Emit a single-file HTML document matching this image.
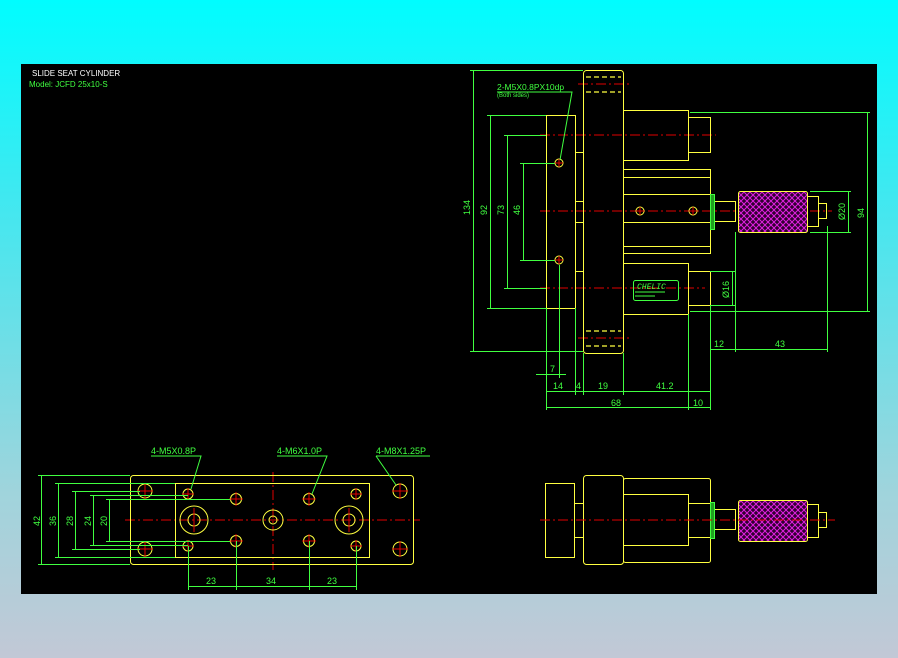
<!DOCTYPE html>
<html><head><meta charset="utf-8"><style>
html,body{margin:0;padding:0;}
body{width:898px;height:658px;overflow:hidden;background:linear-gradient(180deg,#00fdff 0%,#40e8f0 30%,#a0d4dc 75%,#c2c8d6 100%);position:relative;font-family:"Liberation Mono",monospace;}
#cad{position:absolute;left:0;top:0;}
</style></head><body>
<svg id="cad" width="898" height="658" viewBox="0 0 898 658" xmlns="http://www.w3.org/2000/svg">
<defs>
<pattern id="kn" width="6" height="6" patternUnits="userSpaceOnUse">
<rect width="6" height="6" fill="#300030"/>
<path d="M0 0L6 6M6 0L0 6" stroke="#e020e0" stroke-width="1"/>
</pattern>
</defs>
<rect x="21" y="64" width="856" height="530" fill="#000"/>
<text x="32" y="76" fill="#fff" font-size="8" font-family="Liberation Sans,sans-serif">SLIDE SEAT CYLINDER</text>
<text x="29" y="87" fill="#40ff40" font-size="8" font-family="Liberation Sans,sans-serif">Model: JCFD 25x10-S</text>

<!-- red centre lines -->
<g stroke="#e00000" stroke-width="1" stroke-dasharray="10,3,2,3" fill="none">
<path d="M578 84H630M578 338H630M540 135H716M540 211H832M540 288H705"/>
<path d="M125 520H420M273 472V570M540 520H835"/>
</g>

<!-- top view yellow -->
<g stroke="#ffff40" stroke-width="1" fill="none">
<rect x="583.5" y="70.5" width="40" height="283" rx="3"/>
<rect x="546.5" y="115.5" width="29" height="193"/>
<path d="M575.5 152.5H583.5M575.5 201.5H583.5M575.5 222.5H583.5M575.5 271.5H583.5"/>
<rect x="623.5" y="110.5" width="65" height="50"/>
<rect x="688.5" y="117.5" width="22" height="35"/>
<rect x="623.5" y="169.5" width="87" height="84"/>
<path d="M623.5 177.5H710.5M623.5 194.5H710.5M623.5 222.5H710.5M623.5 246.5H710.5"/>
<rect x="714.5" y="201.5" width="21" height="20"/>
<rect x="623.5" y="263.5" width="65" height="51"/>
<rect x="688.5" y="271.5" width="22" height="34"/>
<rect x="807.5" y="196.5" width="11" height="30"/>
<rect x="818.5" y="203.5" width="8" height="15"/>
<circle cx="559" cy="163" r="4"/><circle cx="559" cy="260" r="4"/>
<circle cx="640" cy="211" r="4"/><circle cx="693" cy="211" r="4"/>
</g>
<g stroke="#ffff40" stroke-dasharray="5,3" stroke-width="1.2">
<path d="M586 77H621M586 92H621M586 331H621M586 346H621"/>
</g>
<rect x="738.5" y="191.5" width="69" height="41" rx="2" fill="url(#kn)" stroke="#ffff40"/>
<rect x="710.5" y="194.5" width="4" height="35" fill="#20a020" stroke="#40ff40"/>
<g stroke="#e00000"><path d="M555 163h8M559 159v8M555 260h8M559 256v8M636 211h8M640 207v8M689 211h8M693 207v8"/></g>
<rect x="633.5" y="280.5" width="45" height="20" rx="2" fill="none" stroke="#40ff40"/>
<text x="637" y="289" fill="#40ff40" font-size="8" font-style="italic">CHELIC</text>
<path d="M635 292h30M635 296h20" stroke="#40ff40"/>

<!-- top view green dims -->
<g stroke="#40ff40" stroke-width="1" fill="none">
<path d="M473.5 70V351M470 70.5H583M470 351.5H583"/>
<path d="M490.5 115V308M487 115.5H546M487 308.5H546"/>
<path d="M507.5 135V288M504 135.5H546M504 288.5H546"/>
<path d="M523.5 163V260M520 163.5H555M520 260.5H555"/>
<path d="M497 92H572L560 160"/>
<path d="M867.5 112V311M690 112.5H870M690 311.5H870"/>
<path d="M848.5 191V232M810 191.5H851M810 232.5H851"/>
<path d="M732.5 271V305M710 271.5H735M710 305.5H735"/>
<path d="M710.5 305V410M735.5 232V352M827.5 226V352M710 349.5H827"/>
<path d="M546.5 308V410M575.5 308V395M583.5 353V395M623.5 353V395M688.5 314V410M559.5 265V378M536 374.5H566M546 391.5H710M546 407.5H710"/>
</g>
<g fill="#40ff40" font-size="9" font-family="Liberation Sans,sans-serif">
<text x="497" y="90" font-size="8.5">2-M5X0.8PX10dp</text>
<text x="497" y="97" font-size="6">(Both sides)</text>
<text transform="translate(470 215) rotate(-90)">134</text>
<text transform="translate(487 215) rotate(-90)">92</text>
<text transform="translate(504 215) rotate(-90)">73</text>
<text transform="translate(520 215) rotate(-90)">46</text>
<text transform="translate(864 218) rotate(-90)">94</text>
<text transform="translate(845 220) rotate(-90)">Ø20</text>
<text transform="translate(729 298) rotate(-90)">Ø16</text>
<text x="714" y="347">12</text><text x="775" y="347">43</text>
<text x="550" y="372">7</text>
<text x="553" y="389">14</text><text x="576" y="389">4</text><text x="598" y="389">19</text><text x="656" y="389">41.2</text>
<text x="611" y="406">68</text><text x="693" y="406">10</text>
</g>

<!-- bottom left view -->
<g stroke="#ffff40" stroke-width="1" fill="none">
<rect x="130.5" y="475.5" width="283" height="89" rx="3"/>
<rect x="175.5" y="483.5" width="194" height="74"/>
<circle cx="194" cy="520" r="14"/><circle cx="194" cy="520" r="6"/>
<circle cx="273" cy="520" r="10"/><circle cx="273" cy="520" r="4"/>
<circle cx="349" cy="520" r="14"/><circle cx="349" cy="520" r="6"/>
<circle cx="145" cy="491" r="7"/><circle cx="145" cy="549" r="7"/>
<circle cx="400" cy="491" r="7"/><circle cx="400" cy="549" r="7"/>
<circle cx="188" cy="494" r="5"/><circle cx="188" cy="546" r="5"/>
<circle cx="356" cy="494" r="5"/><circle cx="356" cy="546" r="5"/>
<circle cx="236" cy="499" r="5.5"/><circle cx="236" cy="541" r="5.5"/>
<circle cx="309" cy="499" r="5.5"/><circle cx="309" cy="541" r="5.5"/>
</g>
<g stroke="#e00000">
<path d="M137 491h16M145 483v16M137 549h16M145 541v16M392 491h16M400 483v16M392 549h16M400 541v16"/>
<path d="M182 494h12M188 488v12M182 546h12M188 540v12M350 494h12M356 488v12M350 546h12M356 540v12"/>
<path d="M229 499h14M236 492v14M229 541h14M236 534v14M302 499h14M309 492v14M302 541h14M309 534v14"/>
<path d="M194 508v24M349 508v24"/>
</g>
<g stroke="#40ff40" stroke-width="1" fill="none">
<path d="M41.5 475V564M38 475.5H130M38 564.5H130"/>
<path d="M58.5 483V557M55 483.5H175M55 557.5H175"/>
<path d="M75.5 491V549M72 491.5H140M72 549.5H140"/>
<path d="M93.5 495V545M90 495.5H188M90 545.5H188"/>
<path d="M109.5 499V541M106 499.5H230M106 541.5H230"/>
<path d="M188.5 546V590M236.5 541V590M309.5 541V590M356.5 546V590M188 586.5H357"/>
<path d="M151 456H201L191 489M277 456H327L312 494M376 456H430M376 456L396 485"/>
</g>
<g fill="#40ff40" font-size="9" font-family="Liberation Sans,sans-serif">
<text x="151" y="454">4-M5X0.8P</text>
<text x="277" y="454">4-M6X1.0P</text>
<text x="376" y="454">4-M8X1.25P</text>
<text transform="translate(40 526) rotate(-90)">42</text>
<text transform="translate(56 526) rotate(-90)">36</text>
<text transform="translate(73 526) rotate(-90)">28</text>
<text transform="translate(91 526) rotate(-90)">24</text>
<text transform="translate(107 526) rotate(-90)">20</text>
<text x="206" y="584">23</text><text x="266" y="584">34</text><text x="327" y="584">23</text>
</g>

<!-- bottom right view -->
<g stroke="#ffff40" stroke-width="1" fill="none">
<rect x="545.5" y="483.5" width="29" height="74"/>
<rect x="583.5" y="475.5" width="40" height="89" rx="3"/>
<path d="M575 503.5H583M575 537.5H583"/>
<rect x="623.5" y="478.5" width="87" height="84" rx="2"/>
<rect x="623.5" y="494.5" width="65" height="51"/>
<path d="M688.5 503.5H710M688.5 537.5H710"/>
<rect x="714.5" y="509.5" width="21" height="20"/>
<rect x="807.5" y="504.5" width="11" height="33"/>
<rect x="818.5" y="512.5" width="8" height="15"/>
</g>
<rect x="710.5" y="502.5" width="4" height="36" fill="#20a020" stroke="#40ff40"/>
<rect x="738.5" y="500.5" width="69" height="41" rx="2" fill="url(#kn)" stroke="#ffff40"/>
<path d="M540 520H835" stroke="#e00000" stroke-dasharray="10,3,2,3"/>
</svg>
</body></html>
